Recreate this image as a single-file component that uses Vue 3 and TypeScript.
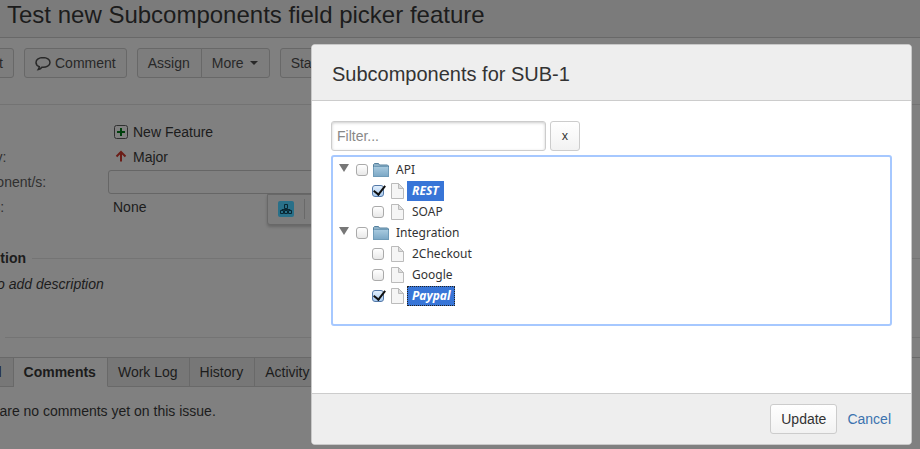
<script setup lang="ts">
import { ref } from 'vue'

interface TreeItem {
  id: string
  label: string
  checked: boolean
  focused?: boolean
}

interface TreeGroup extends TreeItem {
  children: TreeItem[]
}

const filter = ref('')

const groups = ref<TreeGroup[]>([
  {
    id: 'api',
    label: 'API',
    checked: false,
    children: [
      { id: 'rest', label: 'REST', checked: true },
      { id: 'soap', label: 'SOAP', checked: false },
    ],
  },
  {
    id: 'integration',
    label: 'Integration',
    checked: false,
    children: [
      { id: '2checkout', label: '2Checkout', checked: false },
      { id: 'google', label: 'Google', checked: false },
      { id: 'paypal', label: 'Paypal', checked: true, focused: true },
    ],
  },
])

const tabs = ['All', 'Comments', 'Work Log', 'History', 'Activity']
const activeTab = ref('Comments')
</script>

<template>
  <div class="screen">
    <main class="issue">
      <header class="issue-header">
        <h1>Test new Subcomponents field picker feature</h1>
      </header>

      <div class="toolbar">
        <button type="button" class="tool edit">Edit</button>
        <button type="button" class="tool">
          <svg class="bubble" viewBox="0 0 16 15" aria-hidden="true">
            <path
              d="M8 1.5C4.2 1.5 1 3.6 1 6.4c0 1.9 1.3 3.4 3.3 4.2-.1 1.1-.4 2-1 2.9 1.6-.3 2.8-1.2 3.6-2.3 4.6.4 8.1-1.8 8.1-4.8 0-2.8-3.200-4.900-7-4.900z"
            />
          </svg>
          Comment
        </button>
        <div class="tool-group">
          <button type="button" class="tool">Assign</button>
          <button type="button" class="tool">More <span class="caret"></span></button>
        </div>
        <button type="button" class="tool">Start</button>
      </div>

      <div class="content">
        <dl class="details">
          <dt>Type:</dt>
          <dd>
            <svg class="type-icon" viewBox="0 0 14 14" aria-hidden="true">
              <rect class="box" x="0.5" y="0.5" width="13" height="13" rx="2" />
              <path class="plus" d="M7 3v8M3 7h8" />
            </svg>
            New Feature
          </dd>
          <dt>Priority:</dt>
          <dd>
            <svg class="priority-icon" viewBox="0 0 14 14" aria-hidden="true">
              <path d="M7 11.5V3M2.500 6.500L7 2l4.500 4.500" />
            </svg>
            Major
          </dd>
          <dt><label for="components">Component/s:</label></dt>
          <dd class="field">
            <input id="components" type="text" />
            <div class="field-tools">
              <button type="button" class="picker" aria-label="Pick subcomponents">
                <svg viewBox="0 0 16 16" aria-hidden="true">
                  <path
                    d="M6.500 3.500h3v4h-3zM2.500 9.500h3v3h-3zM6.500 9.500h3v3h-3zM10.500 9.500h3v3h-3zM8 7.500v2M4 9.500V8.500h8v1"
                  />
                </svg>
              </button>
              <span class="divider"></span>
            </div>
          </dd>
          <dt>Labels:</dt>
          <dd>None</dd>
        </dl>

        <section class="description">
          <h2>Description</h2>
          <p>Click to add description</p>
        </section>

        <section class="activity">
          <nav class="tabs">
            <button
              v-for="tab in tabs"
              :key="tab"
              type="button"
              :class="{ active: tab === activeTab }"
              @click="activeTab = tab"
            >
              {{ tab }}
            </button>
          </nav>
          <p>There are no comments yet on this issue.</p>
        </section>
      </div>
    </main>

    <div class="dialog" role="dialog" aria-labelledby="dialog-title">
      <header>
        <h2 id="dialog-title">Subcomponents for SUB-1</h2>
      </header>
      <div class="dialog-body">
        <div class="filter">
          <input v-model="filter" type="text" placeholder="Filter..." aria-label="Filter" />
          <button type="button" aria-label="Clear filter" @click="filter = ''">x</button>
        </div>
        <div class="tree">
          <template v-for="group in groups" :key="group.id">
            <div class="row">
              <span class="expander"></span>
              <input :id="group.id" v-model="group.checked" type="checkbox" />
              <svg class="folder" viewBox="0 0 16 14" aria-hidden="true">
                <defs>
                  <linearGradient :id="group.id + '-fill'" x1="0" y1="0" x2="0" y2="1">
                    <stop offset="0" stop-color="#a9cbe0" />
                    <stop offset="1" stop-color="#7ba7c5" />
                  </linearGradient>
                </defs>
                <path class="back" d="M.5 13.500V1.500L1.500.5h4l1 1.500h8l1 1v10.500z" />
                <path
                  class="front"
                  :fill="`url(#${group.id}-fill)`"
                  d="M.5 4.500l1-1h13l1 1v9H.5z"
                />
              </svg>
              <label :for="group.id">{{ group.label }}</label>
            </div>
            <div v-for="item in group.children" :key="item.id" class="row child">
              <input :id="item.id" v-model="item.checked" type="checkbox" />
              <svg class="file" viewBox="0 0 13 16" aria-hidden="true">
                <path d="M.5.500h7l5 5v10H.5z" />
                <path class="fold" d="M7.500.5v5h5z" />
              </svg>
              <label :for="item.id" :class="{ selected: item.checked, focused: item.focused }">{{
                item.label
              }}</label>
            </div>
          </template>
        </div>
      </div>
      <footer>
        <button type="button">Update</button>
        <a href="#">Cancel</a>
      </footer>
    </div>
  </div>
</template>

<style>
body {
  margin: 0;
  background: #808080;
}
</style>

<style scoped>
.screen {
  position: relative;
  min-height: 100vh;
  overflow: hidden;
  font: 14px/20px 'Liberation Sans', Arial, sans-serif;
  color: #1c1c1c;
}

.screen *,
.screen *::before {
  box-sizing: border-box;
}

h1,
h2,
p,
dl,
dd {
  margin: 0;
  font-weight: normal;
}

button,
input {
  margin: 0;
  font: inherit;
  color: inherit;
}

/* The issue view is scrolled sideways, so its left edge is out of sight. */
.issue {
  margin-left: -51px;
}

.issue-header {
  padding: 0 58px 7px;
  background: #7b7b7b;
  border-bottom: 1px solid #686868;
}

.issue-header h1 {
  font-size: 24px;
  line-height: 30px;
}

.toolbar {
  display: flex;
  gap: 10px;
  padding: 10px 10px 26px;
  border-bottom: 1px solid #737373;
}

.tool {
  display: flex;
  align-items: center;
  height: 30px;
  padding: 0 10px;
  background: #7d7d7d;
  border: 1px solid #686868;
  border-radius: 3px;
  color: #282828;
  white-space: nowrap;
}

.edit {
  justify-content: flex-end;
  width: 55px;
}

.bubble {
  width: 16px;
  height: 15px;
  margin-right: 4px;
  fill: none;
  stroke: #282828;
  stroke-width: 1.5;
}

.tool-group {
  display: flex;
}

.tool-group .tool {
  padding-right: 11px;
}

.tool-group .tool:first-child {
  border-radius: 3px 0 0 3px;
}

.tool-group .tool:last-child {
  margin-left: -1px;
  border-radius: 0 3px 3px 0;
}

.caret {
  margin-left: 6px;
  border: 4px solid transparent;
  border-top-color: #282828;
  border-bottom: 0;
}

.content {
  padding-top: 14px;
}

.details {
  display: grid;
  grid-template-columns: 154px 1fr;
  grid-auto-rows: 25px;
  align-items: center;
  padding-left: 10px;
}

.details dt {
  color: #303030;
}

.details dd {
  display: flex;
  align-items: center;
}

.type-icon,
.priority-icon {
  width: 14px;
  height: 14px;
  margin: 0 5px 0 1px;
  fill: none;
}

.box {
  stroke: #303030;
}

.plus {
  stroke: #00400c;
  stroke-width: 2;
}

.priority-icon {
  stroke: #6b1d17;
  stroke-width: 2;
}

.details .field {
  position: relative;
  margin-left: -5px;
}

.field input {
  width: 320px;
  height: 24px;
  background: #808080;
  border: 1px solid #666;
  border-radius: 3px;
}

.field-tools {
  position: absolute;
  top: 24px;
  left: 159px;
  display: flex;
  align-items: center;
  gap: 10px;
  width: 80px;
  height: 31px;
  padding-left: 10px;
  background: #7d7d7d;
  border: 1px solid #686868;
  border-radius: 0 0 3px 3px;
  box-shadow: 0 2px 3px #0003;
}

.picker {
  width: 16px;
  height: 16px;
  padding: 0;
  background: #297089;
  border: 0;
  border-radius: 2px;
}

.picker svg {
  display: block;
  fill: none;
  stroke: #082733;
}

.divider {
  width: 1px;
  height: 20px;
  background: #696969;
}

.description {
  padding-top: 29px;
}

.description h2 {
  display: flex;
  align-items: center;
  gap: 6px;
  font-size: 14px;
  font-weight: bold;
}

.description h2::after {
  content: '';
  flex: 1;
  height: 1px;
  background: #747474;
}

.description p {
  padding: 6px 10px 0;
  font-style: italic;
}

.activity {
  padding-top: 43px;
}

.activity::before {
  content: '';
  display: block;
  height: 20px;
  margin-left: 56px;
  border-top: 1px solid #747474;
}

.tabs {
  display: flex;
  padding-left: 27px;
  border-top: 1px solid #696969;
}

.tabs button {
  padding: 4px 11px 4px 10px;
  background: #777;
  border: solid #696969;
  border-width: 0 1px 1px 0;
  white-space: nowrap;
}

.tabs .active {
  background: #808080;
  border-bottom-color: #808080;
  font-weight: bold;
}

.activity p {
  padding: 14px 10px;
}

.dialog {
  position: absolute;
  top: 44px;
  right: 8px;
  display: flex;
  flex-direction: column;
  width: 601px;
  max-width: calc(100% - 16px);
  background: #fff;
  border: 1px solid #c8c8c8;
  border-radius: 4px;
  overflow: hidden;
  color: #333;
}

.dialog header {
  padding: 17px 20px 13px;
  background: #eee;
  border-bottom: 1px solid #ccc;
}

.dialog header h2 {
  font-size: 20px;
  line-height: 25px;
}

.dialog-body {
  padding: 20px 19px 67px;
}

.filter {
  display: flex;
  gap: 4px;
  margin-bottom: 4px;
}

.filter input {
  width: 215px;
  height: 30px;
  padding: 0 5px;
  background: #fff;
  border: 1px solid #ccc;
  border-radius: 3px;
  box-shadow: inset 0 1px 3px #ccc;
}

.filter input::placeholder {
  color: #888;
}

.filter button,
footer button {
  height: 30px;
  padding: 0 10px;
  background: linear-gradient(#fff, #f2f2f2);
  border: 1px solid #ccc;
  border-radius: 3px;
}

.filter button {
  width: 30px;
  padding: 0;
  font: 12px/20px 'Noto Sans', sans-serif;
}

.tree {
  min-height: 171px;
  padding: 2px 6px;
  border: 2px solid #a6c8ff;
  border-radius: 3px;
  font: 12px/18px 'Noto Sans', sans-serif;
}

.row {
  display: flex;
  align-items: center;
  height: 21px;
}

.child {
  padding-left: 33px;
}

.expander {
  align-self: flex-start;
  margin: 5px 7px 0 0;
  border: 5px solid transparent;
  border-top: 8px solid #777;
  border-bottom: 0;
}

.tree input {
  appearance: none;
  width: 12px;
  height: 12px;
  margin-right: 5px;
  background: linear-gradient(#fff, #e8e8e8);
  border: 1px solid #aaa;
  border-radius: 3px;
}

.tree input:checked {
  position: relative;
  background: linear-gradient(#e2effc, #a9cbf0);
  border-color: #5479a8;
}

.tree input:checked::after {
  content: '';
  position: absolute;
  top: -3px;
  left: 3px;
  width: 5px;
  height: 10px;
  border: solid #111;
  border-width: 0 2px 2px 0;
  transform: rotate(38deg);
}

.folder {
  width: 16px;
  height: 14px;
  margin-right: 2px;
}

.folder .back {
  fill: #8fb2c8;
  stroke: #55819f;
}

.folder .front {
  stroke: #6f9bb8;
}

.file {
  width: 13px;
  height: 16px;
  margin: 0 3px 0 2px;
  fill: #f5f5f5;
  stroke: #bbb;
}

.fold {
  fill: #ddd;
}

.tree label {
  padding: 0 4px;
  border: 1px solid transparent;
}

.tree .selected {
  background: #3875d7;
  color: #fff;
  font-style: italic;
  font-weight: bold;
}

.tree .focused {
  border: 1px dotted #222;
}

footer {
  display: flex;
  align-items: center;
  justify-content: flex-end;
  gap: 10px;
  padding: 10px 20px;
  background: #eee;
  border-top: 1px solid #ccc;
}

footer a {
  color: #3b73af;
  text-decoration: none;
}
</style>
